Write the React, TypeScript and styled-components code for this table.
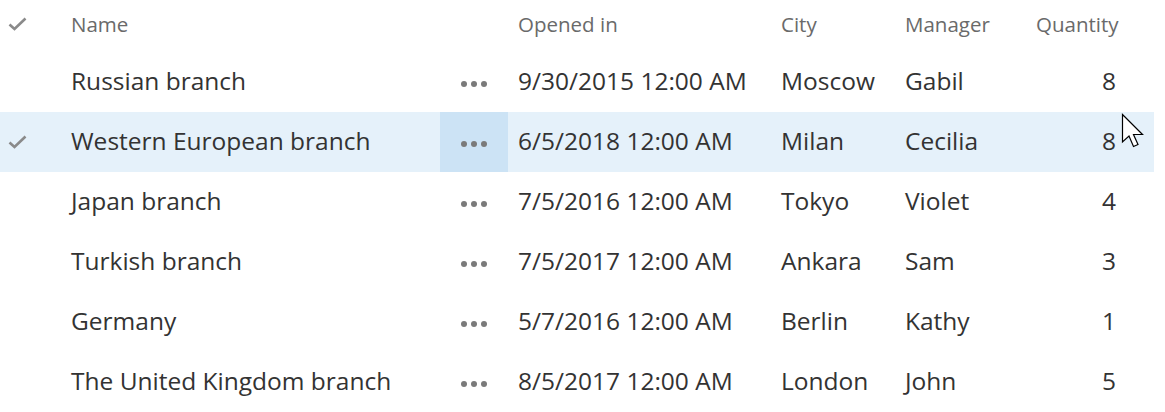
import React from "react";
import styled, { createGlobalStyle } from "styled-components";

const Global = createGlobalStyle`
  html, body { margin: 0; padding: 0; background: #fff; }
  body { font-family: "Open Sans", "Noto Sans", sans-serif; overflow: hidden; }
`;

const Table = styled.div`
  position: relative;
  width: 1154px;
  display: flex;
  flex-direction: column;
`;

const cols = "61px 379px 68px 263px 124px 131px 128px";

const HeaderRow = styled.div`
  display: grid;
  grid-template-columns: ${cols};
  height: 52px;
  align-items: center;
  padding-bottom: 4px;
  box-sizing: border-box;
`;

const Row = styled.div<{ $selected?: boolean }>`
  display: grid;
  grid-template-columns: ${cols};
  height: 60px;
  align-items: stretch;
  background: ${(p) => (p.$selected ? "#e5f1fa" : "#fff")};
`;

const HeadCell = styled.div`
  font-size: 20.5px;
  color: #6a6a6a;
  padding-left: 10px;
  white-space: nowrap;
`;

const Cell = styled.div<{ $right?: boolean }>`
  display: flex;
  align-items: center;
  justify-content: ${(p) => (p.$right ? "flex-end" : "flex-start")};
  padding: ${(p) => (p.$right ? "0 38px 4px 0" : "0 0 4px 10px")};
  font-size: 24.5px;
  color: #333333;
  white-space: nowrap;
`;

const CheckCell = styled.div`
  display: flex;
  align-items: center;
  padding-left: 8px;
`;

const MoreCell = styled.div<{ $active?: boolean }>`
  display: flex;
  align-items: center;
  justify-content: center;
  gap: 4px;
  background: ${(p) => (p.$active ? "#cce3f5" : "transparent")};
  padding-top: 4px;
`;

const Dot = styled.span`
  width: 6px;
  height: 6px;
  border-radius: 50%;
  background: #7a7a7a;
`;

const Cursor = styled.svg`
  position: absolute;
  left: 1121px;
  top: 113px;
`;

const Check = () => (
  <svg width="19" height="14" viewBox="0 0 19 14">
    <path d="M1.5 7.5 L6.5 12 L17.5 1.5" fill="none" stroke="#8a8a8a" strokeWidth="2.6" />
  </svg>
);

const rows = [
  ["Russian branch", "9/30/2015 12:00 AM", "Moscow", "Gabil", "8"],
  ["Western European branch", "6/5/2018 12:00 AM", "Milan", "Cecilia", "8"],
  ["Japan branch", "7/5/2016 12:00 AM", "Tokyo", "Violet", "4"],
  ["Turkish branch", "7/5/2017 12:00 AM", "Ankara", "Sam", "3"],
  ["Germany", "5/7/2016 12:00 AM", "Berlin", "Kathy", "1"],
  ["The United Kingdom branch", "8/5/2017 12:00 AM", "London", "John", "5"],
];

export default function App() {
  return (
    <>
      <Global />
      <Table>
        <HeaderRow>
          <CheckCell>
            <Check />
          </CheckCell>
          <HeadCell>Name</HeadCell>
          <div />
          <HeadCell>Opened in</HeadCell>
          <HeadCell>City</HeadCell>
          <HeadCell>Manager</HeadCell>
          <HeadCell>Quantity</HeadCell>
        </HeaderRow>
        {rows.map((r, i) => {
          const sel = i === 1;
          return (
            <Row key={i} $selected={sel}>
              <CheckCell>{sel && <Check />}</CheckCell>
              <Cell>{r[0]}</Cell>
              <MoreCell $active={sel}>
                <Dot />
                <Dot />
                <Dot />
              </MoreCell>
              <Cell>{r[1]}</Cell>
              <Cell>{r[2]}</Cell>
              <Cell>{r[3]}</Cell>
              <Cell $right>{r[4]}</Cell>
            </Row>
          );
        })}
        <Cursor width="27" height="40" viewBox="0 0 27 40">
          <path
            d="M1.5 1.5 L1.5 29 L8 23 L12.5 33.5 L17 31.5 L12.5 21.5 L21.5 21.5 Z"
            fill="#fff"
            stroke="#000"
            strokeWidth="1.2"
            strokeLinejoin="miter"
          />
        </Cursor>
      </Table>
    </>
  );
}
